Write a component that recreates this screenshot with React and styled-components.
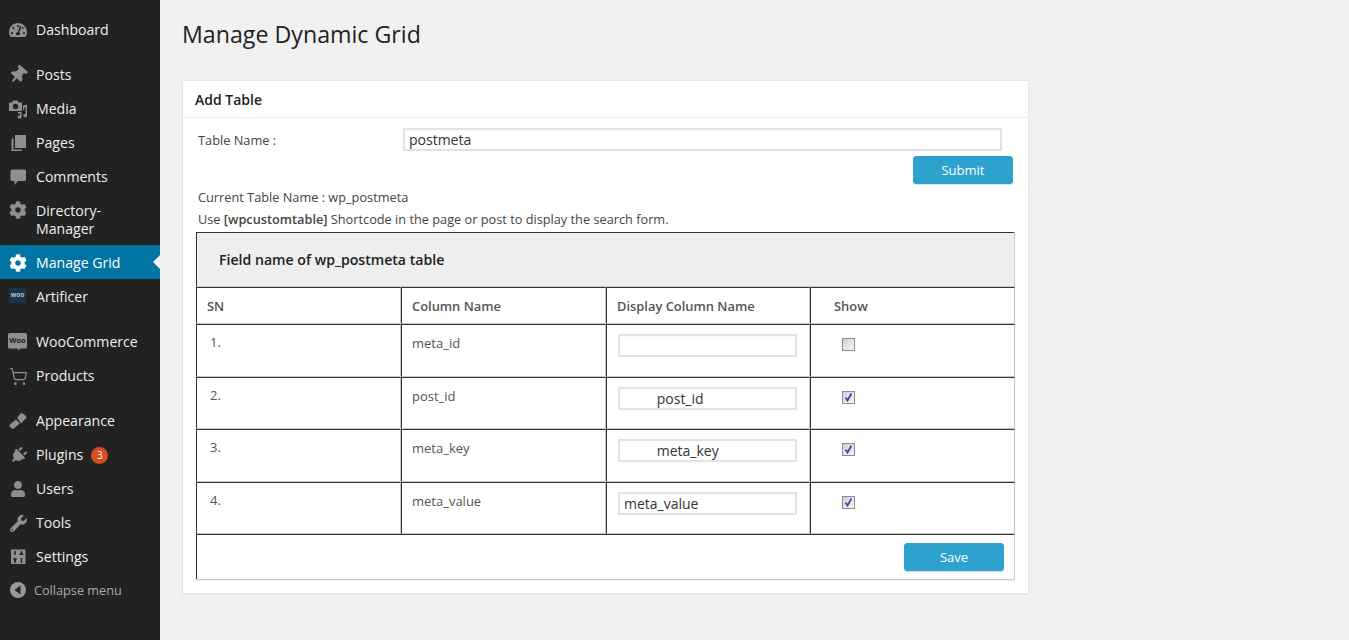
import React from "react";
import styled, { createGlobalStyle } from "styled-components";
import { FaTachometerAlt, FaThumbtack, FaCog, FaPlug, FaUser, FaWrench } from "react-icons/fa";
import { ShoppingCart } from "lucide-react";

const Global = createGlobalStyle`
  html, body, #root { margin: 0; padding: 0; height: 100%; }
  body { background: #f1f1f1; font-family: "Open Sans", "Liberation Sans", sans-serif; color: #444; overflow: hidden; }
  * { box-sizing: border-box; }
`;

const Layout = styled.div`display: flex; height: 640px;`;
const Sidebar = styled.nav`
  width: 160px; flex: none; background: #222; padding-top: 13px;
  display: flex; flex-direction: column;
`;
const Item = styled.a`
  position: relative; display: flex; align-items: center; min-height: ${p => p.$tall ? 51 : 34}px;
  margin-bottom: ${p => p.$sep ? 11 : 0}px; margin-top: ${p => p.$after ? 1 : 0}px; padding-left: 8px; gap: 8px;
  padding-top: ${p => p.$active ? 2 : 0}px;
  font-size: 14.1px; line-height: 18px; color: ${p => p.$active ? "#fff" : "#eee"};
  background: ${p => p.$active ? "#0074a2" : "transparent"};
  ${p => p.$active && `&::after {
    content: ""; position: absolute; right: 0; top: 10px;
    border: 7px solid transparent; border-right-color: #f1f1f1; border-left-width: 0;
  }`}
`;
const IconBox = styled.span`
  width: 20px; height: 20px; flex: none; display: flex; align-items: center; justify-content: center;
  color: ${p => p.$active ? "#fff" : "#8f8f8f"}; align-self: ${p => p.$top ? "flex-start" : "center"};
  margin-top: ${p => p.$top ? 6 : 0}px;
`;
const Badge = styled.span`
  display: inline-block; width: 17px; height: 17px; border-radius: 50%; background: #d54e21; color: #fff;
  font-size: 10px; font-weight: 400; line-height: 17px; text-align: center; margin-left: 8px; vertical-align: 1px;
`;
const Collapse = styled.div`
  display: flex; align-items: center; gap: 6px; padding: 6px 0 0 8px; font-size: 12.7px; line-height: 18px; color: #aaa;
`;
const Main = styled.main`flex: 1; padding: 0 0 0 22px; min-width: 0;`;
const Title = styled.h1`
  margin: 0; padding: 19px 0 0 0; height: 80px; font-size: 23.2px; font-weight: 400; line-height: 31px; color: #222;
`;
const Card = styled.section`
  width: 847px; height: 514px; background: #fff; border: 1px solid #e5e5e5; box-shadow: 0 1px 1px rgba(0,0,0,.04);
`;
const CardHead = styled.h2`
  margin: 0; height: 37px; padding: 0 12px; border-bottom: 1px solid #eee;
  font-size: 14px; font-weight: 600; line-height: 37px; color: #222;
`;
const CardBody = styled.div`padding: 10px 13px 0 15px;`;
const NameRow = styled.div`display: grid; grid-template-columns: 205px 599px; align-items: center; height: 23px;`;
const Label = styled.label`font-size: 12.8px; line-height: 18px; color: #444;`;
const TextInput = styled.input`
  display: block; width: ${p => p.$w || "100%"}; height: 23px; border: 2px solid #e2e2e2;
  padding: 0 4px; font: 14px/19px "Open Sans", sans-serif; color: #333; background: #fff;
  box-shadow: inset 0 1px 2px rgba(0,0,0,.03); outline: none; white-space: pre;
`;
const ButtonRow = styled.div`display: flex; justify-content: flex-end; padding-right: 2px; margin-top: 5px;`;
const Btn = styled.button`
  width: 100px; height: 28px; background: #2ea2cc; border: 1px solid #2ea2cc; border-radius: 3px; padding: 0;
  color: #fff; font: 13px/26px "Open Sans", sans-serif; box-shadow: 0 1px 0 rgba(120,200,230,.4);
`;
const Note = styled.p`margin: ${p => p.$mt}px 0 0; font-size: 12.75px; line-height: 18px; color: #444; b { font-weight: 600; }`;
const GridWrap = styled.div`
  margin-top: 4px; width: 819px; height: 348px; margin-left: -2px;
  border-right: 1px solid #ccc; border-bottom: 1px solid #ccc; box-shadow: 0 1px 1px rgba(0,0,0,.05);
  display: flex; flex-direction: column;
`;
const Caption = styled.div`
  height: 55px; background: #eee; border-top: 1px solid #333; border-left: 1px solid #333; border-bottom: 1px solid #ccc;
  padding-left: 22px; font-size: 14.1px; font-weight: 600; line-height: 53px; color: #222;
`;
const Row = styled.div`
  display: grid; grid-template-columns: 205px 205px 204px 205px; height: ${p => p.$h}px;
`;
const Cell = styled.div`
  border-top: 1px solid #333; border-left: 1px solid #333; border-bottom: 1px solid #c4c4c4; border-right: 1px solid #c4c4c4;
  padding: ${p => p.$pt || 0}px 0 0 ${p => p.$pl || 0}px;
  font-size: ${p => p.$head ? 12.9 : 13}px; line-height: 18px; font-weight: ${p => p.$head ? 600 : 400};
  color: #555;
`;
const Foot = styled.div`
  flex: 1; border-top: 1px solid #333; border-left: 1px solid #333; padding: 8px 10px 0 0;
  display: flex; justify-content: flex-end; align-items: flex-start;
`;
const CheckWrap = styled.span`position: relative; display: block; width: 13px; height: 13px;`;
const CheckInput = styled.input`
  appearance: none; display: block; margin: 0; width: 13px; height: 13px; border: 1px solid #8c8c8c; border-radius: 0;
  background: linear-gradient(135deg, #d0d2d8, #f4f5f7);
`;
const CheckMark = styled.svg`position: absolute; left: 2px; top: 2px; width: 9px; height: 9px; pointer-events: none;`;

const Svg = ({ children }) => (
  <svg width="20" height="20" viewBox="0 0 20 20" fill="currentColor">{children}</svg>
);
const MediaIcon = () => (
  <Svg>
    <path fillRule="evenodd" d="M1 3.500h3L5 1.500h4.500l1 2H14v8.500H1zM7.500 4.800a2.700 2.700 0 1 0 0 5.400a2.700 2.700 0 0 0 0-5.400z" />
    <path d="M15 6.500l4-.8v10.800a1.900 1.600 0 1 1-1.400-1.500V8l-1.200.2V11H15z" />
    <path d="M10 13h3.500v5a1.900 1.600 0 1 1-1.400-1.500V14.500H10z" />
  </Svg>
);
const PagesIcon = () => (
  <Svg>
    <path d="M7 2h11v13H7z" />
    <path d="M3.500 5.500h2v11h8.500V18H3.500z" />
  </Svg>
);
const CommentIcon = () => (
  <Svg>
    <path d="M4 2.500h12.500a1.500 1.500 0 0 1 1.500 1.500v8.500a1.500 1.500 0 0 1-1.500 1.500H10l-3.500 4V14H4a1.500 1.500 0 0 1-1.500-1.500V4A1.500 1.500 0 0 1 4 2.500z" />
  </Svg>
);
const BrushIcon = () => (
  <Svg>
    <path d="M9.200 6.800L13.300 1.500l1.700 1.800 1-.6.500 1.900 1.300-.3.700 2.400-5.500 5.800z" />
    <path d="M8 8.500l3.700 3.700-5.700 5.300c-.8.600-1.600.6-2.200 0l-2.100-2c-.6-.7-.5-1.500.2-2.100z" />
  </Svg>
);
const WooBubble = () => (
  <svg width="20" height="20" viewBox="0 0 20 20">
    <path d="M1.500 1h16a1.500 1.500 0 0 1 1.500 1.500v12.500a1.500 1.500 0 0 1-1.500 1.500h-5.500l-1.500 2-1-2h-8.500A1.500 1.500 0 0 1 0 15V2.500A1.500 1.500 0 0 1 1.500 1z" fill="#8f8f8f" />
    <text x="9.500" y="11" textAnchor="middle" fontSize="7.500" fontWeight="700" fontFamily="Open Sans" fill="#222">Woo</text>
  </svg>
);
const WooBox = () => (
  <svg width="20" height="20" viewBox="0 0 20 20">
    <rect x="1" y="1" width="17" height="15" rx="1" fill="#1b3248" />
    <text x="9.500" y="10" textAnchor="middle" fontSize="6.500" fontWeight="700" fontFamily="Open Sans" fill="#b9c2cc">woo</text>
  </svg>
);
const SettingsIcon = () => (
  <svg width="20" height="20" viewBox="0 0 20 20">
    <rect x="3" y="2.500" width="14.500" height="14.500" fill="#8f8f8f" />
    <path d="M7 4v4M7 11v5M13.500 4v4M13.500 11v5" stroke="#222" strokeWidth="1.500" />
    <path d="M4.800 11.500l2.200 3.500 2.200-3.500zM11.300 8l2.200-3.500L15.700 8z" fill="#222" />
  </svg>
);
const CollapseIcon = () => (
  <svg width="20" height="20" viewBox="0 0 20 20">
    <circle cx="10" cy="10" r="8" fill="#999" />
    <path d="M12.500 5.500v9l-6-4.500z" fill="#222" />
  </svg>
);
const Check = ({ checked }) => (
  <CheckWrap>
    <CheckInput type="checkbox" defaultChecked={checked} />
    {checked && (
      <CheckMark viewBox="0 0 9 9"><path d="M1.500 4.500l2 3L7.500 .5" fill="none" stroke="#3b4f9e" strokeWidth="1.800" /></CheckMark>
    )}
  </CheckWrap>
);

const rows = [
  { n: "1.", name: "meta_id", value: "", checked: false, h: 53 },
  { n: "2.", name: "post_id", value: "         post_id", checked: true, h: 52 },
  { n: "3.", name: "meta_key", value: "         meta_key", checked: true, h: 53 },
  { n: "4.", name: "meta_value", value: "meta_value", checked: true, h: 52 },
];

const menu = [
  { label: "Dashboard", icon: <FaTachometerAlt size={18} />, sep: true },
  { label: "Posts", icon: <FaThumbtack size={18} style={{ transform: "rotate(40deg)" }} /> },
  { label: "Media", icon: <MediaIcon /> },
  { label: "Pages", icon: <PagesIcon /> },
  { label: "Comments", icon: <CommentIcon /> },
  { label: "Directory-Manager", icon: <FaCog size={18} />, tall: true },
  { label: "Manage Grid", icon: <FaCog size={18} />, active: true },
  { label: "Artificer", icon: <WooBox />, sep: true, after: true },
  { label: "WooCommerce", icon: <WooBubble /> },
  { label: "Products", icon: <ShoppingCart size={19} strokeWidth={1.5} />, sep: true },
  { label: "Appearance", icon: <BrushIcon /> },
  { label: "Plugins", icon: <FaPlug size={17} style={{ transform: "rotate(45deg)" }} />, badge: "3" },
  { label: "Users", icon: <FaUser size={16} /> },
  { label: "Tools", icon: <FaWrench size={17} /> },
  { label: "Settings", icon: <SettingsIcon /> },
];

export default function App() {
  return (
    <Layout>
      <Global />
      <Sidebar>
        {menu.map(m => (
          <Item key={m.label} $sep={m.sep} $tall={m.tall} $active={m.active} $after={m.after}>
            <IconBox $active={m.active} $top={m.tall}>{m.icon}</IconBox>
            <span>{m.tall ? <>Directory-<br />Manager</> : m.label}{m.badge && <Badge>{m.badge}</Badge>}</span>
          </Item>
        ))}
        <Collapse>
          <IconBox><CollapseIcon /></IconBox>
          <span>Collapse menu</span>
        </Collapse>
      </Sidebar>
      <Main>
        <Title>Manage Dynamic Grid</Title>
        <Card>
          <CardHead>Add Table</CardHead>
          <CardBody>
            <NameRow>
              <Label>Table Name :</Label>
              <TextInput defaultValue="postmeta" />
            </NameRow>
            <ButtonRow><Btn>Submit</Btn></ButtonRow>
            <Note $mt={4}>Current Table Name : wp_postmeta</Note>
            <Note $mt={4}>Use <b>[wpcustomtable]</b> Shortcode in the page or post to display the search form.</Note>
            <GridWrap>
              <Caption>Field name of wp_postmeta table</Caption>
              <Row $h={37}>
                <Cell $head $pl={10} $pt={9}>SN</Cell>
                <Cell $head $pl={10} $pt={9}>Column Name</Cell>
                <Cell $head $pl={10} $pt={9}>Display Column Name</Cell>
                <Cell $head $pl={23} $pt={9}>Show</Cell>
              </Row>
              {rows.map(r => (
                <Row key={r.n} $h={r.h}>
                  <Cell $pl={13} $pt={8}>{r.n}</Cell>
                  <Cell $pl={10} $pt={9}>{r.name}</Cell>
                  <Cell $pl={11} $pt={9}><TextInput $w="179px" defaultValue={r.value} /></Cell>
                  <Cell $pl={31} $pt={13}><Check checked={r.checked} /></Cell>
                </Row>
              ))}
              <Foot><Btn>Save</Btn></Foot>
            </GridWrap>
          </CardBody>
        </Card>
      </Main>
    </Layout>
  );
}
